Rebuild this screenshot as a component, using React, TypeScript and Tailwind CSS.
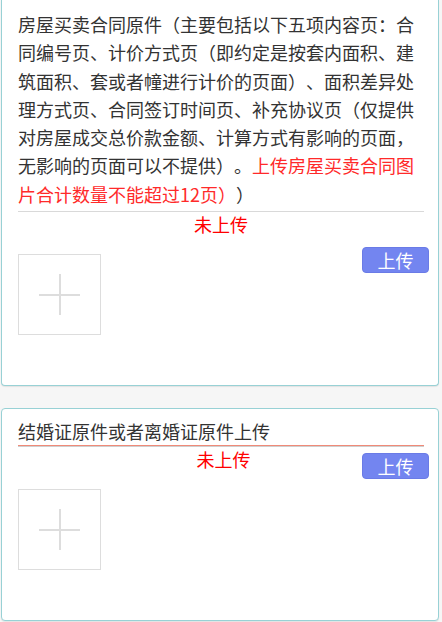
import React from "react";

function PlusBox() {
  return (
    <div className="relative mt-[18px] h-[81px] w-[83px] shrink-0 border border-[#dddddd] bg-white">
      <div className="absolute left-[20px] top-[39px] h-[2px] w-[41px] bg-[#dddddd]" />
      <div className="absolute left-[40px] top-[19px] h-[41px] w-[2px] bg-[#dddddd]" />
    </div>
  );
}

function UploadButton({ className = "" }: { className?: string }) {
  return (
    <button
      className={
        "h-[26px] w-[67px] shrink-0 rounded-[4px] border border-[#6a7be6] bg-[#7385f0] text-[18px] leading-[24px] text-white " +
        className
      }
    >
      上传
    </button>
  );
}

export default function App() {
  return (
    <div className="min-h-[622px] w-[442px] bg-[#f6f6f6] font-['Noto_Sans_CJK_SC','Microsoft_YaHei',sans-serif] text-[18px] text-[#333333] [text-spacing-trim:space-all]">
      <div className="ml-[1px] w-[438px] rounded-b-[4px] border border-t-0 border-[#98d1d5] bg-white pb-[50px] pl-[16px] pr-[9px] pt-[10px] shadow-[0_1px_1px_rgba(0,0,0,0.08)]">
        <p className="leading-[28.3px] [text-spacing-trim:space-all]">
          房屋买卖合同原件（主要包括以下五项内容页：合同编号页、计价方式页（即约定是按套内面积、建筑面积、套或者幢进行计价的页面）、面积差异处理方式页、合同签订时间页、补充协议页（仅提供对房屋成交总价款金额、计算方式有影响的页面，无影响的页面可以不提供）。
          <span className="text-[#ff2a2a]">上传房屋买卖合同图片合计数量不能超过12页）</span>）
        </p>
        <div className="mr-[5px] mt-[3px] h-px bg-[#d9d9d9]" />
        <div className="mr-[5px] text-center leading-[24px] text-[#ff0000]">未上传</div>
        <div className="flex items-start">
          <PlusBox />
          <UploadButton className="ml-auto mt-[11px]" />
        </div>
      </div>

      <div className="ml-[1px] mt-[22px] w-[438px] rounded-[4px] border border-[#98d1d5] bg-white pb-[50px] pl-[16px] pr-[9px] pt-[8px] shadow-[0_1px_1px_rgba(0,0,0,0.08)]">
        <div className="leading-[28px]">结婚证原件或者离婚证原件上传</div>
        <div className="mr-[5px] h-px bg-[#f08a78]" />
        <div className="mr-[5px] h-px bg-[#cfcfcf]" />
        <div className="grid grid-cols-[1fr_auto_1fr] items-start">
          <div />
          <div className="leading-[24px] text-[#ff0000]">未上传</div>
          <UploadButton className="mt-[6px] justify-self-end" />
        </div>
        <div className="-mt-[8px]">
          <PlusBox />
        </div>
      </div>
    </div>
  );
}
